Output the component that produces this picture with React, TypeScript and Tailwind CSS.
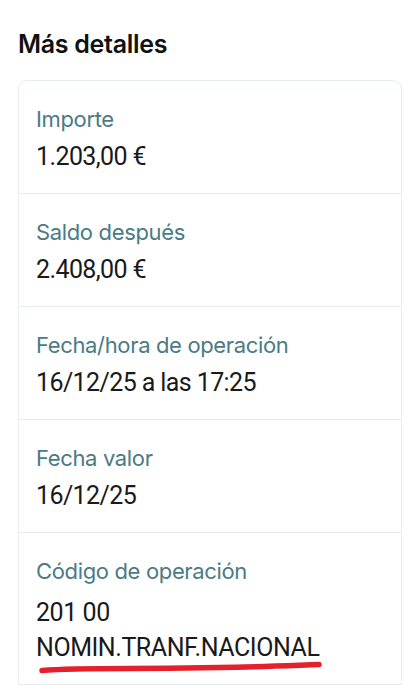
import React from "react";

const rows: { label: string; value: string[] }[] = [
  { label: "Importe", value: ["1.203,00 €"] },
  { label: "Saldo después", value: ["2.408,00 €"] },
  { label: "Fecha/hora de operación", value: ["16/12/25 a las 17:25"] },
  { label: "Fecha valor", value: ["16/12/25"] },
  { label: "Código de operación", value: ["201 00", "NOMIN.TRANF.NACIONAL"] },
];

export default function App() {
  return (
    <div className="relative min-h-[685px] bg-white px-[18px] pt-[28px] font-['Inter',sans-serif]">
      <h1 className="text-[25px] leading-[32px] font-semibold text-[#111111] tracking-[-0.3px]">
        Más detalles
      </h1>

      <div className="mt-[20px] rounded-t-[9px] border border-b-0 border-[#e6eef0]">
        {rows.map((row) => (
          <div
            key={row.label}
            className="border-b border-[#e6eef0] px-[17px] pt-[24px] pb-[19px]"
          >
            <div className="text-[22px] leading-[28px] tracking-[-0.35px] text-[#4a7b84]">
              {row.label}
            </div>
            {row.value.length > 1 ? (
              <div className="mt-[10px] font-['Roboto',sans-serif] text-[25px] leading-[35px] tracking-[-0.45px] text-[#1a1a1a]">
                {row.value.map((v) => (
                  <div key={v}>{v}</div>
                ))}
              </div>
            ) : (
              <div className="mt-[7px] font-['Roboto',sans-serif] text-[25px] leading-[34px] tracking-[-0.6px] text-[#1a1a1a]">
                {row.value[0]}
              </div>
            )}
          </div>
        ))}
        <div className="h-[40px]"></div>
      </div>

      {/* red hand-drawn underline */}
      <svg
        className="absolute left-[36px] top-[657px] pointer-events-none"
        width="290"
        height="20"
        viewBox="0 0 290 20"
        fill="none"
      >
        <path
          d="M6 13.5 C 30 11.5, 60 11.5, 94 11.5 C 130 11.2, 160 11, 200 10.2 C 235 9.4, 262 8.2, 283 7.5"
          stroke="#e3202b"
          strokeWidth="5.5"
          strokeLinecap="round"
        />
      </svg>
    </div>
  );
}
